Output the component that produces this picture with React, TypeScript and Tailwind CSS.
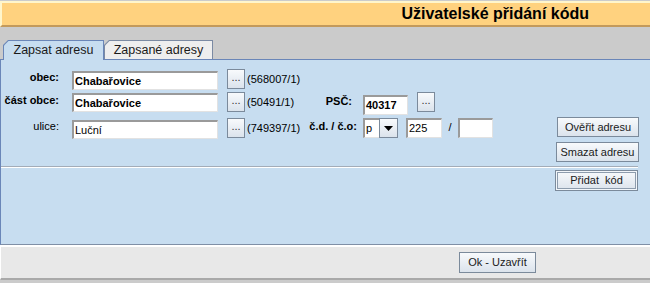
import React from "react";

function Field({ w, value, bold, className = "" }: { w: string; value?: string; bold?: boolean; className?: string }) {
  return (
    <div
      className={`${w} ${className} h-[19px] shrink-0 bg-white border-t-2 border-l-2 border-t-[#9a9a9a] border-l-[#9a9a9a] border-r border-b border-r-[#e2e2e2] border-b-[#e2e2e2] flex items-center pl-[1px] text-[11px] leading-[13px] text-black ${bold ? "font-bold" : ""}`}
    >
      {value}
    </div>
  );
}

function Btn({ className = "", children }: { className?: string; children?: React.ReactNode }) {
  return (
    <div
      className={`shrink-0 flex items-center justify-center border border-[#7b8a9b] bg-linear-to-b from-[#f8fafc] to-[#dbe3ec] text-[11px] leading-[13px] text-[#1a1a1a] ${className}`}
    >
      {children}
    </div>
  );
}

function Dots({ className = "" }: { className?: string }) {
  return <Btn className={`w-[18px] h-[20px] pb-[3px] text-[#333] ${className}`}>...</Btn>;
}

function Label({ w, bold, children, className = "" }: { w: string; bold?: boolean; children: React.ReactNode; className?: string }) {
  return (
    <div className={`${w} ${className} shrink-0 text-right text-[11px] leading-[14px] text-black mt-[1px] ${bold ? "font-bold" : ""}`}>
      {children}
    </div>
  );
}

function Code({ children }: { children: React.ReactNode }) {
  return <div className="ml-[2px] w-[56px] shrink-0 mt-[3px] text-[11px] leading-[14px] text-black whitespace-nowrap">{children}</div>;
}

export default function App() {
  return (
    <div className="w-[650px] h-[283px] bg-[#cbcbcb] flex flex-col overflow-hidden font-['Liberation_Sans',Arial,sans-serif]">
      {/* header */}
      <div className="mt-px h-[26px] shrink-0 bg-[#ffd27f] border-t-2 border-l-2 border-t-[#fff6cc] border-l-[#fff6cc] border-b-2 border-b-[#c39a5c] flex items-center justify-end pr-[61px]">
        <span className="text-[16px] leading-[18px] font-bold text-black">Uživatelské přidání kódu</span>
      </div>

      {/* tabs */}
      <div className="relative z-10 flex items-start pl-[3px] pt-[13px] shrink-0">
        <div className="w-[101px] h-[20px] bg-[#6a86b8] pt-px px-px [clip-path:polygon(5px_0,100%_0,100%_100%,0_100%,0_5px)]">
          <div className="h-full bg-[#c7ddf0] [clip-path:polygon(4.5px_0,100%_0,100%_100%,0_100%,0_4.5px)] flex items-center justify-center text-[12.5px] leading-[15px] text-[#1a1a1a] pb-px">
            Zapsat adresu
          </div>
        </div>
        <div className="w-[109px] h-[19px] bg-[#7b8aa3] pt-px px-px [clip-path:polygon(5px_0,100%_0,100%_100%,0_100%,0_5px)]">
          <div className="h-full bg-[#eeeeee] [clip-path:polygon(4.5px_0,100%_0,100%_100%,0_100%,0_4.5px)] flex items-center justify-center text-[12.5px] leading-[15px] text-[#1a1a1a]">
            Zapsané adresy
          </div>
        </div>
      </div>

      {/* panel */}
      <div className="-mt-px h-[186px] shrink-0 bg-[#c7ddf0] border-t border-l border-t-[#6a86b8] border-l-[#6a86b8] border-b border-b-[#7f8fa6] flex flex-col pt-[9px]">
        {/* row 1 */}
        <div className="flex items-start h-[23px] shrink-0">
          <Label w="w-[58px]" bold>obec:</Label>
          <Field w="w-[146px]" className="ml-[13px] mt-[2px]" value="Chabařovice" bold />
          <Dots className="ml-[9px]" />
          <Code>(568007/1)</Code>
        </div>
        {/* row 2 */}
        <div className="flex items-start h-[26px] shrink-0">
          <Label w="w-[58px]" bold>část obce:</Label>
          <Field w="w-[146px]" className="ml-[13px] mt-[1px]" value="Chabařovice" bold />
          <Dots className="ml-[9px]" />
          <Code>(50491/1)</Code>
          <Label w="w-[49px]" bold className="mt-[2px]">PSČ:</Label>
          <Field w="w-[45px]" className="ml-[11px] mt-[3px] h-[20px]" value="40317" bold />
          <Dots className="ml-[9px]" />
        </div>
        {/* row 3 */}
        <div className="flex items-start h-[24px] shrink-0 pr-[11px]">
          <Label w="w-[58px]">ulice:</Label>
          <Field w="w-[146px]" className="ml-[13px] mt-[2px]" value="Luční" />
          <Dots className="ml-[9px]" />
          <Code>(749397/1)</Code>
          <Label w="w-[54px]" bold>č.d. / č.o:</Label>
          <div className="ml-[6px] w-[35px] h-[20px] shrink-0 flex">
            <div className="flex-1 bg-white border-t-2 border-l-2 border-t-[#9a9a9a] border-l-[#9a9a9a] border-b border-b-[#e2e2e2] flex items-center pl-[1px] text-[11px] leading-[13px] text-black">
              p
            </div>
            <Btn className="w-[19px] h-[20px]">
              <svg width="9" height="5" viewBox="0 0 9 5">
                <path d="M0 0h9L4.5 5z" fill="#000" />
              </svg>
            </Btn>
          </div>
          <Field w="w-[36px]" className="ml-[8px] h-[20px]" value="225" />
          <div className="w-[16px] shrink-0 text-center text-[11px] leading-[14px] mt-[2px] text-black">/</div>
          <Field w="w-[35px]" className="h-[20px]" />
          <div className="flex-1" />
          <Btn className="w-[82px] h-[20px] -mt-px">Ověřit adresu</Btn>
        </div>
        {/* Smazat */}
        <div className="flex justify-end pr-[11px] h-[20px] shrink-0">
          <Btn className="w-[83px] h-[20px]">Smazat adresu</Btn>
        </div>
        {/* separator */}
        <div className="mt-[4px] mr-[12px] h-[2px] shrink-0 border-t border-t-[#a3acb8] border-b border-b-white" />
        {/* Přidat */}
        <div className="mt-[2px] flex justify-end pr-[12px] shrink-0">
          <Btn className="w-[83px] h-[21px] border-[#6b7b8b] shadow-[inset_0_0_0_1px_#f2f6fa,inset_0_0_0_2px_#8d9cad]">Přidat&nbsp; kód</Btn>
        </div>
      </div>

      {/* bottom bar */}
      <div className="h-[35px] shrink-0 bg-[#e8e8e8] border-t-2 border-t-white border-l border-l-white border-b-2 border-b-[#a9a9a9] flex justify-end items-start pt-[5px] pr-[114px]">
        <Btn className="w-[77px] h-[21px]">Ok - Uzavřít</Btn>
      </div>
    </div>
  );
}
